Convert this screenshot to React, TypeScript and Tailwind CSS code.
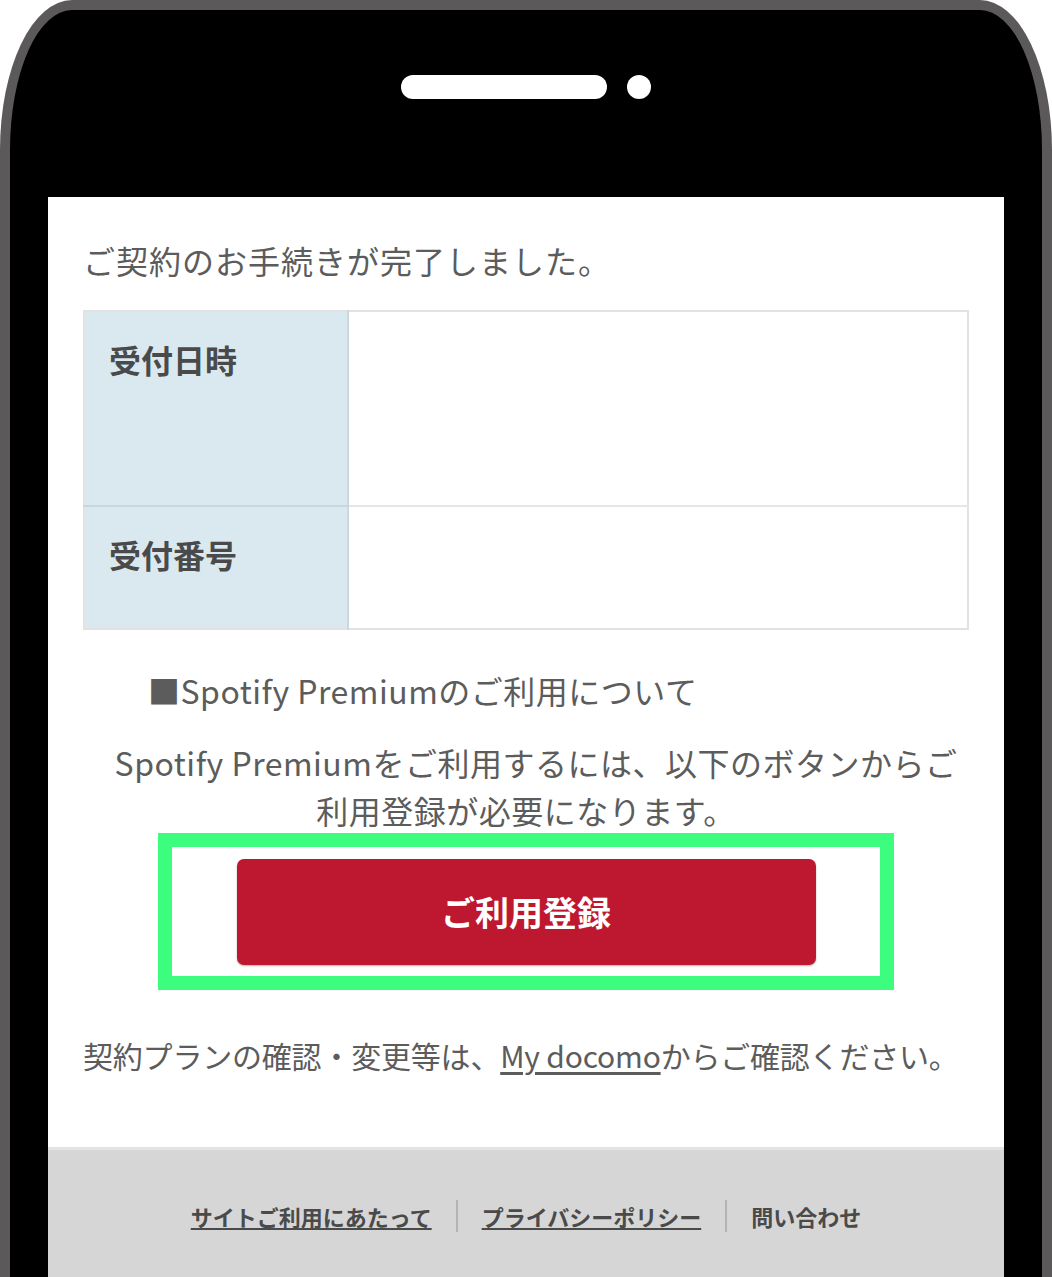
const jp = { fontFamily: '"Noto Sans CJK JP", "Noto Sans", sans-serif' };

function FooterLinks() {
  return (
    <div className="flex items-center justify-center text-[22px] font-bold leading-[30px] text-[#4a4a4a]">
      <a className="underline underline-offset-2">サイトご利用にあたって</a>
      <span className="mx-[24px] h-[32px] w-[2px] bg-[#b4b4b4]" />
      <a className="underline underline-offset-2">プライバシーポリシー</a>
      <span className="mx-[24px] h-[32px] w-[2px] bg-[#b4b4b4]" />
      <a>問い合わせ</a>
    </div>
  );
}

export default function App() {
  return (
    <div className="h-[1277px] w-[1052px] overflow-hidden bg-white" style={jp}>
      <div className="flex h-[1320px] flex-col rounded-t-[72px_150px] border-[10px] border-b-0 border-[#5b5959] bg-black">
        {/* speaker + camera */}
        <div className="flex h-[187px] shrink-0 items-start justify-center gap-[20px] pt-[65px]">
          <div className="h-[24px] w-[206px] rounded-full bg-white" />
          <div className="h-[24px] w-[24px] rounded-full bg-white" />
        </div>

        {/* screen */}
        <div className="ml-[38px] mr-[38px] flex flex-1 flex-col bg-white">
          <div className="px-[35px] pt-[43px]">
            <h1 className="text-[32px] font-normal leading-[40px] tracking-[1px] text-[#5c5c5c]">
              ご契約のお手続きが完了しました。
            </h1>

            <table className="mt-[30px] w-full border-collapse border-[2px] border-[#e2e2e2]">
              <tbody>
                <tr className="h-[195px]">
                  <th className="w-[264px] border-r-[2px] border-b-[2px] border-r-[#cbd8dd] border-b-[#c9d6dc] bg-[#d9e9ef] pl-[24px] pt-[27px] text-left align-top text-[32px] font-bold leading-[40px] text-[#4a4a4a]">
                    受付日時
                  </th>
                  <td className="border-b-[2px] border-[#e6e6e6]" />
                </tr>
                <tr className="h-[123px]">
                  <th className="border-r-[2px] border-r-[#cbd8dd] bg-[#d9e9ef] pl-[24px] pt-[27px] text-left align-top text-[32px] font-bold leading-[40px] text-[#4a4a4a]">
                    受付番号
                  </th>
                  <td />
                </tr>
              </tbody>
            </table>

            <p className="mt-[36px] pl-[65px] text-[32px] leading-[48px] tracking-[0.5px] text-[#5c5c5c]">
              ■Spotify Premiumのご利用について
            </p>

            <p className="mt-[24px] pl-[20px] text-center text-[32px] leading-[48px] tracking-[0.5px] text-[#5c5c5c]">
              Spotify Premiumをご利用するには、以下のボタンからご
              <br />
              <span className="-ml-[20px]">利用登録が必要になります。</span>
            </p>

            <div className="mx-auto mt-[-1px] flex h-[157px] w-[736px] items-center justify-center border-[14px] border-[#3dfd7f]">
              <button className="h-[106px] w-[579px] rounded-[7px] bg-[#be1830] text-[34px] font-bold text-white shadow-[0_1px_2px_rgba(0,0,0,0.3)]">
                ご利用登録
              </button>
            </div>

            <p className="mt-[45px] text-[30px] leading-[40px] tracking-[-0.2px] text-[#5c5c5c]">
              契約プランの確認・変更等は、<a className="underline underline-offset-4">My docomo</a>からご確認ください。
            </p>
          </div>

          <footer className="mt-[72px] flex-1 border-t-[3px] border-[#e4e4e4] bg-[#d6d6d6] pt-[50px]">
            <FooterLinks />
          </footer>
        </div>
      </div>
    </div>
  );
}
